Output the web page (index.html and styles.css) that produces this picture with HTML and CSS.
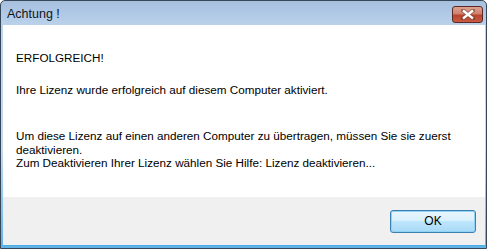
FILE: index.html
```html
<!DOCTYPE html>
<html lang="de">
<head>
  <meta charset="UTF-8" />
  <title>Achtung !</title>
  <link rel="stylesheet" href="styles.css">
</head>
<body>
  <div class="window">
    <div class="titlebar">
      <span class="title">Achtung !</span>
      <button class="close" aria-label="Schließen">
        <svg width="14" height="11" viewBox="0 0 14 11">
          <path d="M2 1.5 L12 9.5 M12 1.5 L2 9.5" stroke="#55301f" stroke-width="4" stroke-linecap="square" opacity="0.5"/>
          <path d="M2 1.5 L12 9.5 M12 1.5 L2 9.5" stroke="#fff" stroke-width="2.4"/>
        </svg>
      </button>
    </div>
    <div class="client">
      <div class="message">
        <p>ERFOLGREICH!</p>
        <p>Ihre Lizenz wurde erfolgreich auf diesem Computer aktiviert.</p>
        <p class="gap">Um diese Lizenz auf einen anderen Computer zu übertragen, müssen Sie sie zuerst<br>deaktivieren.<br>Zum Deaktivieren Ihrer Lizenz wählen Sie Hilfe: Lizenz deaktivieren...</p>
      </div>
      <div class="footer">
        <button class="ok">OK</button>
      </div>
    </div>
  </div>
</body>
</html>
```

FILE: styles.css
```css
body {
  margin: 0;
  background: #fff;
}
.window {
  width: 487px;
  height: 249px;
  box-sizing: border-box;
  border: 1px solid #36475a;
  border-radius: 5px 5px 0 0;
  background: linear-gradient(#a6c0de, #bed5ee 12%, #c6daee 60%, #5fb3e4);
  display: flex;
  flex-direction: column;
}
.titlebar {
  height: 24px;
  display: flex;
  align-items: center;
  justify-content: space-between;
  padding: 0 3px 0 6px;
}
.title {
  font-family: "Liberation Sans", Arial, sans-serif;
  font-size: 12.5px;
  color: #0f1620;
  padding-top: 2px;
}
.close {
  width: 31px;
  height: 17px;
  margin-top: 2px;
  padding: 0;
  border: 1px solid #5a2a24;
  border-radius: 3px;
  background: linear-gradient(#e0a190, #d0806e 45%, #b9432e 55%, #c85b43);
  display: flex;
  align-items: center;
  justify-content: center;
}
.client {
  flex: 1;
  margin: 0 1px 2px 2px;
  display: flex;
  flex-direction: column;
  background: #fff;
  border-bottom: 1px solid #4aaee6;
}
.message {
  flex: 1;
  padding: 16px 12px 0 13px;
  font-family: "Liberation Sans", Arial, sans-serif;
  font-size: 11.7px;
  line-height: 13.5px;
  color: #000;
}
.message p {
  margin: 18px 0 0;
}
.message p:first-child {
  margin-top: 10px;
}
.message .gap {
  margin-top: 33px;
}
.footer {
  height: 48px;
  background: #f0f0f0;
  display: flex;
  align-items: center;
  justify-content: flex-end;
  padding-right: 9px;
}
.ok {
  width: 86px;
  height: 23px;
  border: 1px solid #3c7fb1;
  border-radius: 3px;
  background: linear-gradient(#eaf6fd, #d9f0fc 45%, #bee6fd 50%, #a7d9f5);
  box-shadow: inset 0 0 0 1px #8ed2f4;
  font-family: "Liberation Sans", Arial, sans-serif;
  font-size: 12px;
  color: #000;
  padding: 0;
}
```
